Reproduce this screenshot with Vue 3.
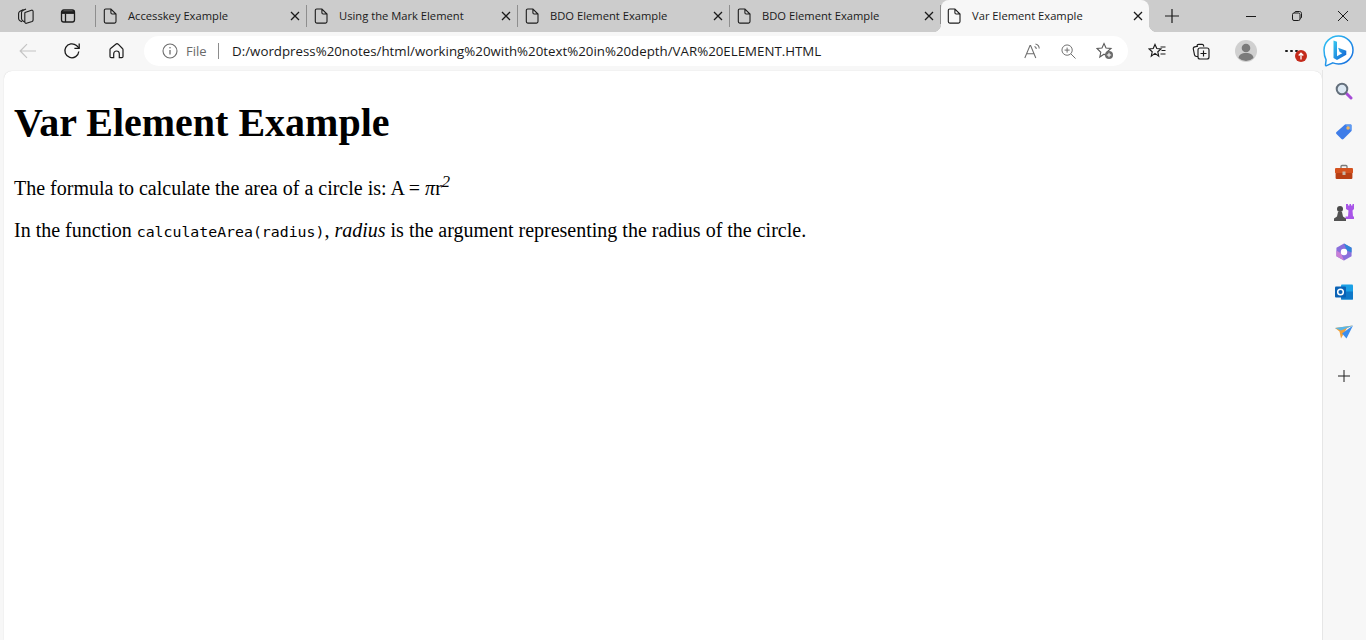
<script setup>
const tabs = [
  { title: 'Accesskey Example', w: 211 },
  { title: 'Using the Mark Element', w: 211 },
  { title: 'BDO Element Example', w: 212 },
  { title: 'BDO Element Example', w: 211 }
]
</script>

<template>
  <div class="window">
    <header class="strip">
      <div class="strip-btn">
        <svg width="18" height="18" viewBox="0 0 18 18" fill="none" stroke="#1c1c1c" stroke-width="1.1"><path d="M6.5 2.5 3 4.200C2 4.700 1.600 5.500 1.600 6.600v4.800c0 1 .5 1.800 1.400 2.300l2 1"/><path d="M9 2 5.800 3.600C4.900 4 4.500 4.800 4.500 5.800v5.800c0 1 .5 1.800 1.400 2.300l2 1.100"/><path d="m8 5.500 6.500-2.300c.8-.3 1.600.3 1.600 1.200v8.700c0 .7-.4 1.200-1 1.500L9.500 16.300c-.8.300-1.700-.3-1.700-1.200V6.800c0-.6.100-1.100.2-1.300z"/></svg>
      </div>
      <div class="strip-btn second">
        <svg width="16" height="16" viewBox="0 0 16 16" fill="none" stroke="#1c1c1c" stroke-width="1.300"><rect x="1.500" y="2" width="13" height="12" rx="2.200"/><path d="M1.500 4.500h13" stroke-width="2.800"/><path d="M5.500 5.500V14"/></svg>
      </div>
      <div class="first-sep"></div>
      <div v-for="t in tabs" :key="t.title + t.w" class="tab" :style="{ width: t.w + 'px' }">
        <svg class="page-icon" width="14" height="16" viewBox="0 0 14 16" fill="none" stroke="#1c1c1c" stroke-width="1.100"><path d="M2.800 1h5.100L13 6v7.600c0 .9-.6 1.500-1.500 1.500H2.800c-.9 0-1.500-.6-1.500-1.500V2.500C1.300 1.600 1.900 1 2.800 1zM7.900 1v3.800c0 .7.500 1.200 1.200 1.200H13"/></svg>
        <span class="tab-title">{{ t.title }}</span>
        <svg class="tab-close" width="10" height="10" viewBox="0 0 10 10" stroke="#1a1a1a" stroke-width="1.300"><path d="m1 1 8 8M9 1 1 9"/></svg>
      </div>
      <div class="tab active">
        <svg class="page-icon" width="14" height="16" viewBox="0 0 14 16" fill="none" stroke="#1c1c1c" stroke-width="1.100"><path d="M2.800 1h5.100L13 6v7.600c0 .9-.6 1.500-1.500 1.500H2.800c-.9 0-1.500-.6-1.500-1.500V2.500C1.300 1.600 1.900 1 2.800 1zM7.900 1v3.800c0 .7.500 1.200 1.200 1.200H13"/></svg>
        <span class="tab-title">Var Element Example</span>
        <svg class="tab-close" width="10" height="10" viewBox="0 0 10 10" stroke="#1a1a1a" stroke-width="1.300"><path d="m1 1 8 8M9 1 1 9"/></svg>
      </div>
      <svg class="new-tab" width="14" height="14" viewBox="0 0 14 14" stroke="#1a1a1a" stroke-width="1.200"><path d="M7 0v14M0 7h14"/></svg>
      <div class="win-controls">
        <svg width="10" height="10" viewBox="0 0 10 10" stroke="#1a1a1a" stroke-width="1"><path d="M0 5.500h10"/></svg>
        <svg width="10" height="10" viewBox="0 0 10 10" fill="none" stroke="#1a1a1a" stroke-width="1"><rect x=".5" y="2" width="7.500" height="7.500" rx="1.500"/><path d="M2.500 1.800c.1-.8.600-1.300 1.400-1.300h3.600c1.200 0 2 .8 2 2V6c0 .8-.5 1.300-1.300 1.400"/></svg>
        <svg width="10" height="10" viewBox="0 0 10 10" stroke="#1a1a1a" stroke-width="1"><path d="m0 0 10 10M10 0 0 10"/></svg>
      </div>
    </header>

    <nav class="toolbar">
      <svg class="tool back" width="18" height="16" viewBox="0 0 18 16" fill="none" stroke="#c4c4c4" stroke-width="1.200"><path d="M17 8H1.500M8 1.200 1.200 8 8 14.800"/></svg>
      <svg class="tool reload" width="18" height="18" viewBox="0 0 18 18" fill="none" stroke="#1a1a1a" stroke-width="1.300"><path d="M15.800 9.500A7 7 0 1 1 13.500 3.600L16 6"/><path d="M16.200 1.500V6.300h-4.800"/></svg>
      <svg class="tool home" width="16" height="16" viewBox="0 0 16 16" fill="none" stroke="#1a1a1a" stroke-width="1.200"><path d="M6.800 1.200 1.600 5.500c-.4.300-.6.700-.6 1.200v6.800c0 .7.500 1.200 1.200 1.200h2.500V10.800c0-1.600 1.200-2.800 2.800-2.800s2.800 1.200 2.800 2.800v3.900h2.500c.7 0 1.200-.5 1.200-1.200V6.700c0-.5-.2-.9-.6-1.200L9.200 1.200c-.7-.6-1.700-.6-2.400 0z"/></svg>

      <div class="address">
        <svg width="16" height="16" viewBox="0 0 16 16" fill="none" stroke="#6e6e6e" stroke-width="1.100"><circle cx="8" cy="8" r="7"/><path d="M8 7v4.500" stroke-width="1.300"/><circle cx="8" cy="4.800" r=".8" fill="#6e6e6e" stroke="none"/></svg>
        <span class="scheme">File</span>
        <span class="addr-sep"></span>
        <span class="url">D:/wordpress%20notes/html/working%20with%20text%20in%20depth/VAR%20ELEMENT.HTML</span>
        <div class="addr-actions">
          <svg width="17" height="16" viewBox="0 0 17 16" fill="none" stroke="#6e6e6e" stroke-width="1.050"><path d="M.8 15 6 2.500h.6L11.800 15M2.600 10.800h8"/><path d="M10.500 3.500c1.100.3 1.800 1.200 1.800 2.400M11.500 1c2.200.5 3.700 2.300 3.700 4.600"/></svg>
          <svg width="15" height="15" viewBox="0 0 16 16" fill="none" stroke="#6e6e6e" stroke-width="1.050"><circle cx="6.500" cy="6.500" r="5.500"/><path d="M3.800 6.500h5.400M6.500 3.800v5.400M10.500 10.500l5 5"/></svg>
          <svg width="18" height="18" viewBox="0 0 18 18" fill="none"><path d="m8 1.500 2 4.500 5 .5-3.800 3.300 1 4.700L8 12.200l-4.200 2.800 1-4.700L1 6.500 6 6z" stroke="#5a5a5a" stroke-width="1.100"/><circle cx="13" cy="13" r="4" fill="#6a6a6a"/><path d="M13 10.800v4.400M10.800 13h4.400" stroke="#fff" stroke-width="1"/></svg>
        </div>
      </div>

      <svg class="tool favs" width="18" height="16" viewBox="0 0 18 16" fill="none" stroke="#1a1a1a" stroke-width="1.150"><path d="m7 1.500 1.800 4 4.200.4-3.200 2.900.9 4.300L7 10.400l-3.700 2.700.9-4.300L1 5.900l4.200-.4z"/><path d="M12.500 4h5M13.500 7.500h4M12.500 11h5"/></svg>
      <svg class="tool colls" width="18" height="17" viewBox="0 0 18 17" fill="none" stroke="#1a1a1a" stroke-width="1.150"><path d="M5 3.500V3c0-1 .7-1.700 1.700-1.700h3.600c.7 0 1.200.6 1.300 1.300l.2 1"/><path d="M6 13.500H4.500c-1 0-1.800-.7-2-1.600L1.300 6c-.2-1 .4-1.900 1.400-2.100L6 3.300"/><rect x="6" y="5" width="11" height="11" rx="2"/><path d="M11.500 7.500v6M8.500 10.500h6"/></svg>
      <div class="avatar">
        <svg width="22" height="22" viewBox="0 0 22 22"><circle cx="11" cy="11" r="11" fill="#d0d0d0"/><circle cx="11" cy="8" r="4.300" fill="#7b7b7b"/><path d="M3.500 18c.5-3.400 3-5 7.500-5s7 1.600 7.500 5a11 11 0 0 1-15 0z" fill="#7b7b7b"/></svg>
      </div>
      <div class="more">
        <span class="dots">
          <i></i><i></i><i></i>
        </span>
        <svg class="badge" width="12" height="12" viewBox="0 0 11 11"><circle cx="5.500" cy="5.500" r="5.500" fill="#c42b1c"/><path d="M5.500 8.800V3M3.400 5l2.100-2.100L7.600 5" fill="none" stroke="#fff" stroke-width="1.200"/></svg>
      </div>
      <svg class="bing" width="31" height="32" viewBox="0 0 31 32">
        <defs>
          <linearGradient id="bg1" x1="0" y1="0" x2="1" y2="1"><stop offset="0" stop-color="#2fc5f5"/><stop offset="1" stop-color="#1668dc"/></linearGradient>
          <linearGradient id="bg2" x1="0" y1="0" x2="1" y2="1"><stop offset="0" stop-color="#39c9f0"/><stop offset="1" stop-color="#0f5fd4"/></linearGradient>
        </defs>
        <path d="M15.500 1C23.500 1 30 7.300 30 15s-6.500 14-14.500 14c-2 0-3.900-.4-5.600-1.100L3.600 30.600c-.7.300-1.200-.1-1.100-.8l.6-5C1.800 22.400 1 18.800 1 15 1 7.300 7.500 1 15.500 1z" fill="#fff" stroke="url(#bg1)" stroke-width="1.500"/>
        <path d="M10.500 5.500 14 6.800v14.400l5.200-3-2.500-1.200-1.600-4.200 8.200 2.900v4L14 25l-3.500-2z" fill="url(#bg2)"/>
      </svg>
    </nav>

    <div class="body">
      <main class="page">
        <h1>Var Element Example</h1>
        <p class="formula">The formula to calculate the area of a circle is: A = <var>π</var>r<sup><var>2</var></sup></p>
        <p>In the function <code>calculateArea(radius)</code>, <var>radius</var> is the argument representing the radius of the circle.</p>
      </main>
      <aside class="side">
        <svg width="18" height="18" viewBox="0 0 18 18" fill="none"><path d="m10.500 10.500 5.500 5.500" stroke="#a64bd6" stroke-width="3" stroke-linecap="round"/><circle cx="7" cy="7" r="5.300" fill="#dbe7f2" stroke="#64707c" stroke-width="2"/></svg>
        <svg width="18" height="18" viewBox="0 0 18 18"><path d="M10 1.500h5.500c.6 0 1 .4 1 1V8L8.500 16c-.6.600-1.400.600-2 0L1.500 11c-.6-.6-.6-1.400 0-2z" fill="#3f7de8"/><path d="M10 1.500h5.500c.6 0 1 .4 1 1V8z" fill="#5f9bf2"/><circle cx="13" cy="5" r="1.700" fill="#f0b35b"/></svg>
        <svg width="18" height="15" viewBox="0 0 18 15"><path d="M6 4V2c0-.6.400-1 1-1h4c.6 0 1 .4 1 1v2" fill="none" stroke="#7a7a7a" stroke-width="1.300"/><rect y="3.500" width="18" height="5.500" rx="1" fill="#d4521f"/><rect x=".6" y="8.500" width="16.800" height="6" rx="1" fill="#b83f14"/><rect x="7.500" y="7" width="3" height="3.500" fill="#c9b7a8"/></svg>
        <svg width="20" height="18" viewBox="0 0 20 18"><path d="M12 1h2v1.500h1.500V1h1.500v1.500h1.500V1H20v5l-1.500 1.500.5 6h1.500V16h-9v-2.500H14l.5-6L12 6z" fill="#a855e8"/><circle cx="6" cy="6" r="3" fill="#4a4a4a"/><path d="M4 9h4l1 4.500 3 2v2.500H0v-2.500l3-2z" fill="#525252"/></svg>
        <svg width="18" height="19" viewBox="0 0 18 19"><path d="M9 .5 17 5v9l-8 4.500L1 14V5z" fill="#8a6fdc"/><path d="M9 .5 17 5v5l-5-2z" fill="#2f86d8"/><path d="M1 14V8l5 3 3 7.500z" fill="#c97fd6"/><circle cx="9" cy="9.500" r="3.400" fill="#fff"/></svg>
        <svg width="18" height="17" viewBox="0 0 18 17"><rect x="6" y="1" width="12" height="15" rx="1" fill="#1aa0e6"/><path d="M6 8h12v8H6z" fill="#0f78c8"/><rect y="3" width="11" height="11" rx="1" fill="#0a62b5"/><circle cx="5.500" cy="8.500" r="2.800" fill="none" stroke="#fff" stroke-width="1.500"/></svg>
        <svg width="18" height="13" viewBox="0 0 18 13"><path d="M0 2.500 18 0 12 2.500 6 13 4.500 6z" fill="#f0a13c"/><path d="M0 2.500 18 0 6 5z" fill="#57b6ea"/><path d="M18 0 11.500 13 7 8z" fill="#3b8eee"/></svg>
        <svg class="side-plus" width="12" height="12" viewBox="0 0 12 12" stroke="#1f1f1f" stroke-width="1"><path d="M6 0v12M0 6h12"/></svg>
      </aside>
    </div>
  </div>
</template>

<style>
html, body { margin: 0; background: #f7f7f7; overflow: hidden; }
</style>

<style scoped>
.window {
  width: 1366px;
  height: 640px;
  overflow: hidden;
  display: flex;
  flex-direction: column;
  background: #f7f7f7;
  font-family: "Open Sans", "Noto Sans", sans-serif;
}
.strip {
  height: 32px;
  flex: none;
  display: flex;
  align-items: center;
  background: #cccccc;
  color: #1a1a1a;
}
.strip-btn { width: 42px; display: flex; justify-content: center; margin-left: 5px; }
.strip-btn.second { margin-left: 0; }
.first-sep { width: 1px; height: 22px; background: #8e8e8e; margin-left: 6px; }
.tab {
  box-sizing: border-box;
  height: 32px;
  flex: none;
  position: relative;
  display: flex;
  align-items: center;
  padding-left: 7px;
  font-size: 11.200px;
}
.tab:not(.active)::after {
  content: "";
  position: absolute;
  right: 0;
  top: 5px;
  width: 1px;
  height: 22px;
  background: #8e8e8e;
}
.page-icon { flex: none; margin-top: -1px; }
.tab-title { margin-left: 11px; white-space: nowrap; flex: 1; padding-bottom: 2px; }
.tab-close { flex: none; margin-right: 7px; }
.tab.active {
  width: 208px;
  padding-left: 6px;
  background: #f7f7f7;
  border-radius: 8px 8px 0 0;
}
.tab.active .tab-close { margin-right: 6px; }
.tab.active::before, .tab.active::after {
  content: "";
  position: absolute;
  bottom: 0;
  width: 8px;
  height: 8px;
}
.tab.active::before {
  left: -8px;
  background: radial-gradient(circle at 0 0, #cccccc 8px, #f7f7f7 8.500px);
}
.tab.active::after {
  right: -8px;
  background: radial-gradient(circle at 100% 0, #cccccc 8px, #f7f7f7 8.500px);
}
.new-tab { margin-left: 16px; flex: none; }
.win-controls {
  margin-left: auto;
  display: flex;
  align-items: center;
  gap: 36px;
  padding-right: 18px;
}
.toolbar {
  height: 38px;
  flex: none;
  display: flex;
  align-items: center;
  background: #f7f7f7;
}
.tool { flex: none; }
.back { margin-left: 19px; }
.reload { margin-left: 26px; }
.home { margin-left: 28px; }
.address {
  box-sizing: border-box;
  width: 984px;
  height: 30px;
  margin-left: 19px;
  padding: 0 14px 0 18px;
  background: #fff;
  border-radius: 15px;
  display: flex;
  align-items: center;
  font-size: 13px;
  flex: none;
}
.scheme { margin-left: 8px; color: #6a6a6a; font-size: 13px; }
.addr-sep { width: 1px; height: 16px; background: #8c8c8c; margin-left: 11px; }
.url { margin-left: 13.500px; color: #1a1a1a; white-space: nowrap; font-size: 13.300px; }
.addr-actions { margin-left: auto; display: flex; align-items: center; gap: 20px; }
.favs { margin-left: 20px; }
.colls { margin-left: 26px; }
.avatar { margin-left: 25px; width: 22px; height: 22px; flex: none; display: flex; }
.more { position: relative; width: 30px; height: 20px; margin-left: 21px; flex: none; display: flex; align-items: center; }
.dots { display: flex; gap: 2.500px; margin-left: 7px; }
.dots i { width: 2.500px; height: 2.500px; background: #1a1a1a; border-radius: 50%; display: block; }
.badge { position: absolute; left: 17px; top: 9px; }
.bing { margin-left: 15px; flex: none; }
.body { flex: 1; min-height: 0; display: flex; }
.page {
  box-sizing: border-box;
  width: 1318px;
  margin-left: 4px;
  margin-top: 1px;
  background: #fff;
  border-radius: 8px 8px 0 0;
  box-shadow: 0 0 1px rgba(0, 0, 0, .2);
  padding: 10px 10px 0;
  font-family: "Liberation Serif", serif;
  font-size: 20px;
  color: #000;
}
h1 { margin: 19px 0 0; font-size: 40px; line-height: 46px; font-weight: 700; }
p { margin: 0; line-height: 23px; }
.formula { margin-top: 29px; line-height: 26px; }
.formula + p { margin-top: 18px; }
var { font-style: italic; }
sup { font-size: 16.600px; line-height: 0; vertical-align: super; }
code { font-family: "DejaVu Sans Mono", monospace; font-size: 14.850px; }
.side {
  flex: 1;
  box-sizing: border-box;
  display: flex;
  flex-direction: column;
  align-items: center;
  padding: 12px 2px 0 0;
  border-left: 1px solid #e6e6e6;
}
.side svg { flex: none; }
.side > svg { height: 18px; margin-bottom: 22px; }
.side > svg:first-child { margin-bottom: 23px; }
.side-plus { margin-top: 4px; }
</style>
